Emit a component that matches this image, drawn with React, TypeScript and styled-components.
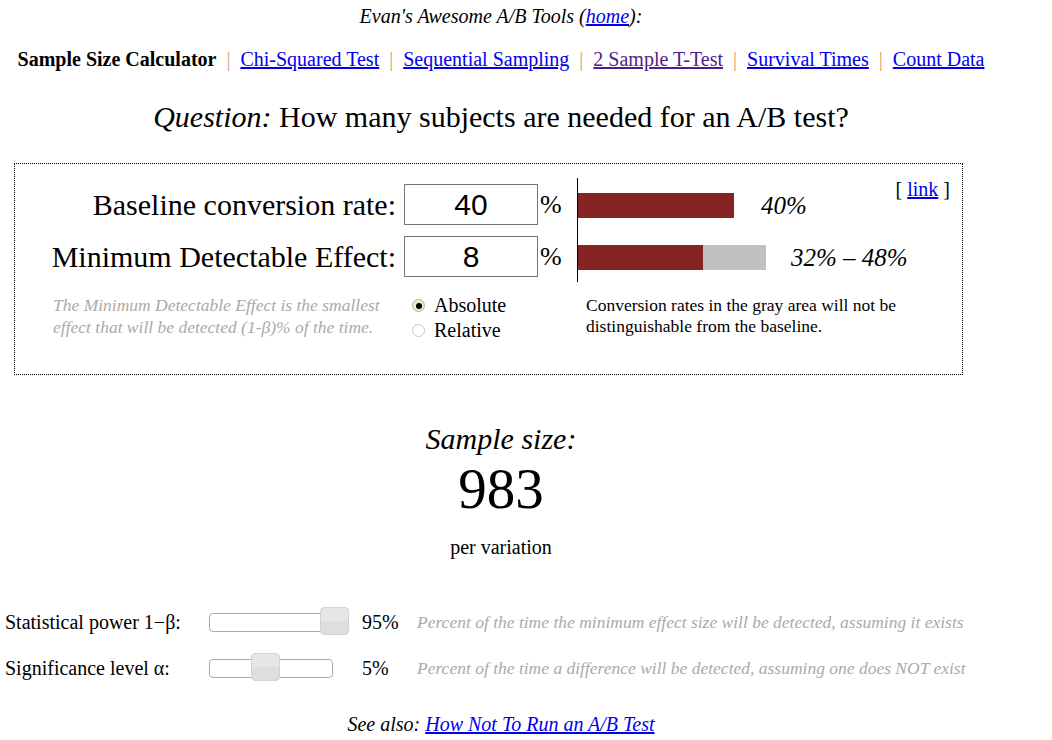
import React from 'react';
import styled, {createGlobalStyle} from 'styled-components';

const GlobalStyle = createGlobalStyle`
  body {
    margin: 0;
    background: #fff;
    font-family: "Liberation Serif", "Times New Roman", serif;
    color: #000;
  }
  a { color: #0000ee; }
`

const Page = styled.div`
  width: 1002px;
  display: flex;
  flex-direction: column;
  align-items: center;
  font-size: 20px;
`

const TopLine = styled.div`
  margin-top: 4px;
  font-style: italic;
  line-height: 24px;
`

const Nav = styled.nav`
  margin-top: 19px;
  line-height: 24px;
  display: flex;
  align-items: center;
`

const NavCurrent = styled.b``

const NavLink = styled.a<{ visited?: boolean }>`
  color: ${p => p.visited ? '#551a8b' : '#0000ee'};
`

const Sep = styled.span`
  color: #d4a373;
  margin: 0 10px;
`

const Question = styled.h1`
  margin: 28px 0 0;
  font-weight: normal;
  font-size: 30px;
  line-height: 36px;
`

const Box = styled.div`
  align-self: flex-start;
  margin: 28px 0 0 14px;
  width: 949px;
  height: 212px;
  box-sizing: border-box;
  border: 1px dotted #000;
  position: relative;
  display: flex;
  flex-direction: column;
`

const TopSection = styled.div`
  display: flex;
`

const Fields = styled.div`
  width: 562px;
  padding-top: 20px;
  display: flex;
  flex-direction: column;
  gap: 11px;
`

const FieldRow = styled.div`
  display: flex;
  align-items: center;
  justify-content: flex-end;
  height: 41px;
`

const FieldLabel = styled.label`
  font-size: 30px;
  white-space: nowrap;
  margin-right: 8px;
`

const NumberBox = styled.div`
  width: 134px;
  height: 41px;
  box-sizing: border-box;
  border: 1px solid #767676;
  font-family: "Liberation Sans", Arial, sans-serif;
  font-size: 30px;
  display: flex;
  align-items: center;
  justify-content: center;
  flex-shrink: 0;
`

const Pct = styled.span`
  font-size: 26px;
  margin-left: 2px;
  width: 37px;
`

const Chart = styled.div`
  margin-top: 14px;
  height: 104px;
  box-sizing: border-box;
  padding-top: 15px;
  border-left: 1px solid #000;
  display: flex;
  flex-direction: column;
  gap: 27px;
`

const BarRow = styled.div`
  display: flex;
  align-items: center;
  height: 25px;
`

const Bar = styled.div<{ gray?: boolean }>`
  height: 25px;
  background: ${p => p.gray ? '#c0c0c0' : '#862323'};
`

const BarLabel = styled.span<{ gap: number }>`
  font-style: italic;
  font-size: 25px;
  margin-left: ${p => p.gap}px;
`

const LinkTag = styled.div`
  position: absolute;
  top: 14px;
  right: 12px;
`

const BottomSection = styled.div`
  display: flex;
  margin-top: 12px;
`

const HelpText = styled.div`
  width: 359px;
  padding-left: 38px;
  font-style: italic;
  font-size: 17.5px;
  line-height: 22px;
  color: #aaa;
`

const Radios = styled.div`
  width: 174px;
  display: flex;
  flex-direction: column;
  margin-top: -1px;
`

const RadioRow = styled.label`
  display: flex;
  align-items: center;
  gap: 9px;
  line-height: 25px;
`

const RadioDot = styled.span<{ on?: boolean }>`
  width: 13px;
  height: 13px;
  box-sizing: border-box;
  border-radius: 50%;
  border: 1px solid ${p => p.on ? '#b8ad98' : '#c8c8c8'};
  background: ${p => p.on ? '#f3e7cf' : '#fff'};
  display: inline-flex;
  align-items: center;
  justify-content: center;
  &::after {
    content: '';
    width: 6px;
    height: 6px;
    border-radius: 50%;
    background: ${p => p.on ? '#000' : 'transparent'};
  }
`

const NoteText = styled.div`
  width: 330px;
  font-size: 17.5px;
  line-height: 21px;
  margin-top: 1px;
`

const Result = styled.div`
  margin-top: 46px;
  display: flex;
  flex-direction: column;
  align-items: center;
`

const ResultTitle = styled.div`
  font-style: italic;
  font-size: 30px;
  line-height: 36px;
`

const ResultNumber = styled.div`
  margin-top: 1px;
  font-size: 57px;
  line-height: 62px;
`

const PerVariation = styled.div`
  margin-top: 15px;
  line-height: 24px;
`

const Sliders = styled.div`
  align-self: stretch;
  margin-top: 49px;
  padding-left: 5px;
  display: flex;
  flex-direction: column;
  gap: 18px;
`

const SliderRow = styled.div`
  display: grid;
  grid-template-columns: 204px auto;
  align-items: center;
  height: 28px;
  white-space: nowrap;
`

const SliderGroup = styled.div`
  display: flex;
  align-items: center;
`

const Track = styled.div<{ w: number }>`
  position: relative;
  width: ${p => p.w}px;
  height: 19px;
  border: 1px solid #aaa;
  border-radius: 4px;
  box-sizing: border-box;
  background: #fff;
`

const Thumb = styled.div`
  position: absolute;
  top: -7px;
  width: 29px;
  height: 28px;
  box-sizing: border-box;
  border: 1px solid #d3d3d3;
  border-radius: 4px;
  background: linear-gradient(#e6e6e6 50%, #dedede 50%);
`

const SliderValue = styled.span<{ w: number }>`
  margin-left: ${p => p.w}px;
  width: 55px;
  flex-shrink: 0;
`

const SliderHelp = styled.span`
  font-style: italic;
  color: #aaa;
  font-size: 17.5px;
`

const SeeAlso = styled.div`
  margin-top: 31px;
  font-style: italic;
`

function Slider({width, at}: { width: number, at: number }) {
    return (
        <Track w={width}>
            <Thumb style={{left: at}}/>
        </Track>
    )
}

export default function App() {
    return (
        <>
            <GlobalStyle/>
            <Page>
                <TopLine>Evan's Awesome A/B Tools (<a href="#">home</a>):</TopLine>
                <Nav>
                    <NavCurrent>Sample Size Calculator</NavCurrent>
                    <Sep>|</Sep>
                    <NavLink href="#">Chi-Squared Test</NavLink>
                    <Sep>|</Sep>
                    <NavLink href="#">Sequential Sampling</NavLink>
                    <Sep>|</Sep>
                    <NavLink href="#" visited>2 Sample T-Test</NavLink>
                    <Sep>|</Sep>
                    <NavLink href="#">Survival Times</NavLink>
                    <Sep>|</Sep>
                    <NavLink href="#">Count Data</NavLink>
                </Nav>
                <Question><em>Question:</em> How many subjects are needed for an A/B test?</Question>

                <Box>
                    <TopSection>
                        <Fields>
                            <FieldRow>
                                <FieldLabel>Baseline conversion rate:</FieldLabel>
                                <NumberBox>40</NumberBox>
                                <Pct>%</Pct>
                            </FieldRow>
                            <FieldRow>
                                <FieldLabel>Minimum Detectable Effect:</FieldLabel>
                                <NumberBox>8</NumberBox>
                                <Pct>%</Pct>
                            </FieldRow>
                        </Fields>
                        <Chart>
                            <BarRow>
                                <Bar style={{width: 156}}/>
                                <BarLabel gap={27}>40%</BarLabel>
                            </BarRow>
                            <BarRow>
                                <Bar style={{width: 125}}/>
                                <Bar gray style={{width: 63}}/>
                                <BarLabel gap={25}>32% – 48%</BarLabel>
                            </BarRow>
                        </Chart>
                    </TopSection>
                    <LinkTag>[ <a href="#">link</a> ]</LinkTag>
                    <BottomSection>
                        <HelpText>
                            The Minimum Detectable Effect is the smallest<br/>
                            effect that will be detected (1-β)% of the time.
                        </HelpText>
                        <Radios>
                            <RadioRow><RadioDot on/>Absolute</RadioRow>
                            <RadioRow><RadioDot/>Relative</RadioRow>
                        </Radios>
                        <NoteText>
                            Conversion rates in the gray area will not be distinguishable from the baseline.
                        </NoteText>
                    </BottomSection>
                </Box>

                <Result>
                    <ResultTitle>Sample size:</ResultTitle>
                    <ResultNumber>983</ResultNumber>
                    <PerVariation>per variation</PerVariation>
                </Result>

                <Sliders>
                    <SliderRow>
                        <span>Statistical power 1−β:</span>
                        <SliderGroup>
                            <Slider width={139} at={110}/>
                            <SliderValue w={14}>95%</SliderValue>
                            <SliderHelp>Percent of the time the minimum effect size will be detected, assuming it exists</SliderHelp>
                        </SliderGroup>
                    </SliderRow>
                    <SliderRow>
                        <span>Significance level α:</span>
                        <SliderGroup>
                            <Slider width={124} at={41}/>
                            <SliderValue w={29}>5%</SliderValue>
                            <SliderHelp>Percent of the time a difference will be detected, assuming one does NOT exist</SliderHelp>
                        </SliderGroup>
                    </SliderRow>
                </Sliders>

                <SeeAlso>See also: <a href="#">How Not To Run an A/B Test</a></SeeAlso>
            </Page>
        </>
    );
}
